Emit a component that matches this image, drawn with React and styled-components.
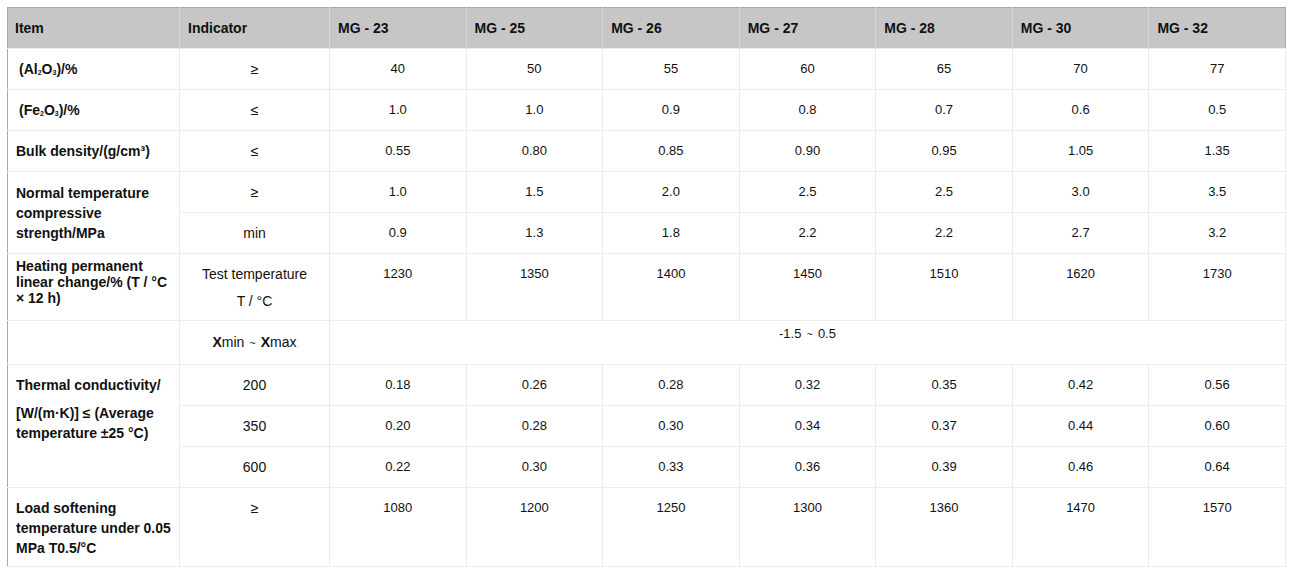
import React from 'react';
import styled, { createGlobalStyle } from 'styled-components';

const GlobalStyle = createGlobalStyle`
    body {
        margin: 7px;
        background: #fff;
        font-family: 'Liberation Sans', Arial, sans-serif;
        color: #111;
    }
`;

const Table = styled.table`
    width: 1279px;
    table-layout: fixed;
    border-collapse: collapse;
    border: 1px solid #a8a8a8;
    box-shadow: 1px 1px 0 #c4c4c4;
    font-size: 13px;
`;

const Head = styled.th`
    height: 40px;
    padding: 0 8px;
    background: #c6c6c6;
    border-left: 1px solid #d6d6d6;
    text-align: left;
    font-size: 14px;
    font-weight: bold;
    vertical-align: middle;
    &:first-child {
        border-left: none;
        padding-left: 7px;
    }
`;

const Item = styled.td`
    padding: ${(p) => p.pad || '10px'} 8px 8px 8px;
    border: 1px solid #ececec;
    border-left: none;
    font-size: 14px;
    font-weight: bold;
    line-height: ${(p) => p.lh || '20px'};
    vertical-align: top;
    text-align: left;
`;

const Cell = styled.td`
    height: ${(p) => p.h || '20px'};
    padding: ${(p) => p.pad || '10px'} 8px 10px;
    border: 1px solid #ececec;
    font-size: ${(p) => (p.text ? '14px' : '13px')};
    line-height: ${(p) => p.lh || '20px'};
    vertical-align: top;
    text-align: center;
`;

const Para = styled.div`
    line-height: 20px;
    margin-bottom: ${(p) => p.mb || 0};
`;

const Sub = styled.sub`
    font-size: 7px;
    line-height: 0;
    vertical-align: baseline;
    position: relative;
    top: 1px;
`;

const Indent = styled.span`
    padding-left: 3px;
`;

const Tilde = styled.span`
    font-size: 11px;
    margin: 0 5px;
`;

const grades = ['MG - 23', 'MG - 25', 'MG - 26', 'MG - 27', 'MG - 28', 'MG - 30', 'MG - 32'];

const Values = ({ list }) => list.map((v, i) => <Cell key={i}>{v}</Cell>);

export default function App() {
    return (
        <>
            <GlobalStyle />
            <Table>
                <colgroup>
                    <col style={{ width: 172 }} />
                    <col style={{ width: 150 }} />
                    {grades.map((g) => (
                        <col key={g} />
                    ))}
                </colgroup>
                <thead>
                    <tr>
                        <Head>Item</Head>
                        <Head>Indicator</Head>
                        {grades.map((g) => (
                            <Head key={g}>{g}</Head>
                        ))}
                    </tr>
                </thead>
                <tbody>
                    <tr>
                        <Item>
                            <Indent>
                                (Al<Sub>2</Sub>O<Sub>3</Sub>)/%
                            </Indent>
                        </Item>
                        <Cell text>≥</Cell>
                        <Values list={['40', '50', '55', '60', '65', '70', '77']} />
                    </tr>
                    <tr>
                        <Item>
                            <Indent>
                                (Fe<Sub>2</Sub>O<Sub>3</Sub>)/%
                            </Indent>
                        </Item>
                        <Cell text>≤</Cell>
                        <Values list={['1.0', '1.0', '0.9', '0.8', '0.7', '0.6', '0.5']} />
                    </tr>
                    <tr>
                        <Item>Bulk density/(g/cm³)</Item>
                        <Cell text>≤</Cell>
                        <Values list={['0.55', '0.80', '0.85', '0.90', '0.95', '1.05', '1.35']} />
                    </tr>
                    <tr>
                        <Item rowSpan={2} pad="11px">
                            Normal temperature compressive strength/MPa
                        </Item>
                        <Cell text>≥</Cell>
                        <Values list={['1.0', '1.5', '2.0', '2.5', '2.5', '3.0', '3.5']} />
                    </tr>
                    <tr>
                        <Cell text>min</Cell>
                        <Values list={['0.9', '1.3', '1.8', '2.2', '2.2', '2.7', '3.2']} />
                    </tr>
                    <tr>
                        <Item pad="4px" lh="16px">
                            Heating permanent linear change/% (T / °C ×&nbsp;12&nbsp;h)
                        </Item>
                        <Cell text pad="7px" lh="27px" h="54px" style={{ paddingBottom: 5 }}>
                            Test temperature
                            <br />T / °C
                        </Cell>
                        <Values list={['1230', '1350', '1400', '1450', '1510', '1620', '1730']} />
                    </tr>
                    <tr>
                        <Item />
                        <Cell text h="22px" pad="11px">
                            <b>X</b>min<Tilde>~</Tilde>
                            <b>X</b>max
                        </Cell>
                        <Cell colSpan={7} pad="3px">
                            -1.5<Tilde>~</Tilde>0.5
                        </Cell>
                    </tr>
                    <tr>
                        <Item rowSpan={3}>
                            <Para mb="8px">Thermal conductivity/</Para>
                            <Para>[W/(m·K)] ≤ (Average temperature ±25 °C)</Para>
                        </Item>
                        <Cell text>200</Cell>
                        <Values list={['0.18', '0.26', '0.28', '0.32', '0.35', '0.42', '0.56']} />
                    </tr>
                    <tr>
                        <Cell text>350</Cell>
                        <Values list={['0.20', '0.28', '0.30', '0.34', '0.37', '0.44', '0.60']} />
                    </tr>
                    <tr>
                        <Cell text>600</Cell>
                        <Values list={['0.22', '0.30', '0.33', '0.36', '0.39', '0.46', '0.64']} />
                    </tr>
                    <tr>
                        <Item>Load softening temperature under 0.05 MPa T0.5/°C</Item>
                        <Cell text>≥</Cell>
                        <Values list={['1080', '1200', '1250', '1300', '1360', '1470', '1570']} />
                    </tr>
                </tbody>
            </Table>
        </>
    );
}
